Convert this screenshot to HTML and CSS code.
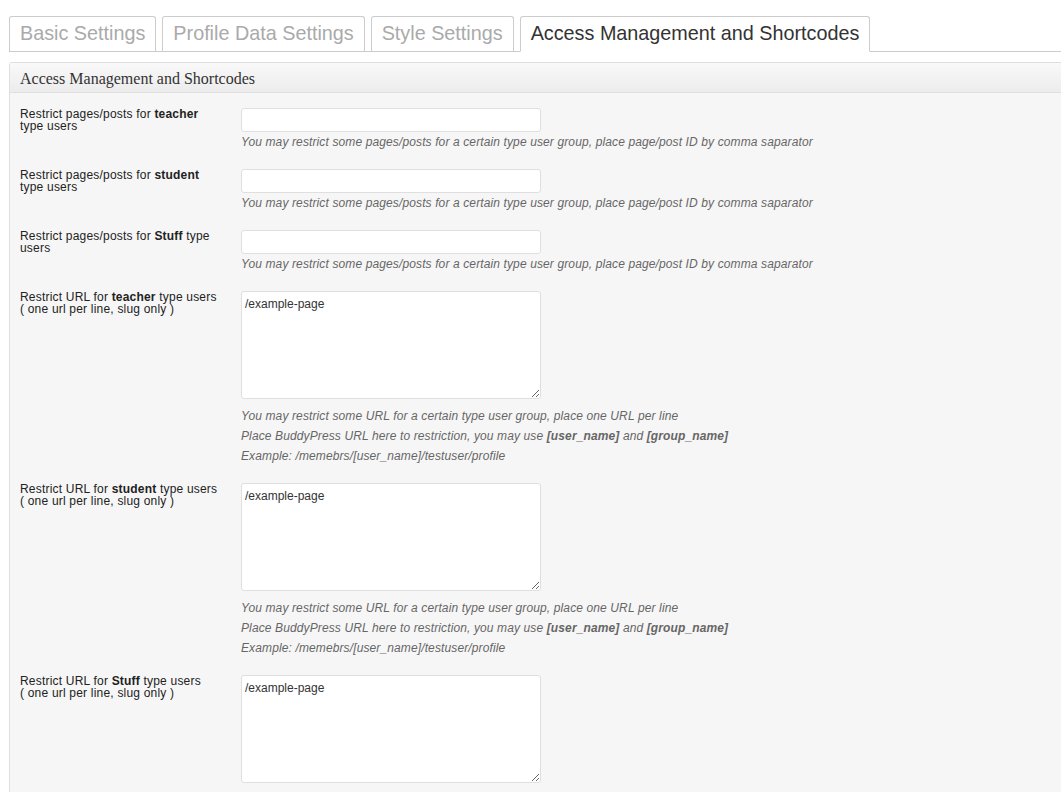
FILE: index.html
```html
<!DOCTYPE html>
<html lang="en">
<head>
<meta charset="utf-8">
<title>Access Management and Shortcodes</title>
<link rel="stylesheet" href="styles.css">
</head>
<body>
<div class="wrap">
  <nav class="tabs">
    <a class="tab">Basic Settings</a>
    <a class="tab">Profile Data Settings</a>
    <a class="tab">Style Settings</a>
    <a class="tab tab-active">Access Management and Shortcodes</a>
  </nav>
  <div class="postbox">
    <h3 class="hndle">Access Management and Shortcodes</h3>
    <div class="inside">
      <div class="row">
        <div class="label">Restrict pages/posts for <b>teacher</b> type users</div>
        <div class="field">
          <input class="text" type="text">
          <p class="desc">You may restrict some pages/posts for a certain type user group, place page/post ID by comma saparator</p>
        </div>
      </div>
      <div class="row">
        <div class="label">Restrict pages/posts for <b>student</b> type users</div>
        <div class="field">
          <input class="text" type="text">
          <p class="desc">You may restrict some pages/posts for a certain type user group, place page/post ID by comma saparator</p>
        </div>
      </div>
      <div class="row">
        <div class="label">Restrict pages/posts for <b>Stuff</b> type users</div>
        <div class="field">
          <input class="text" type="text">
          <p class="desc">You may restrict some pages/posts for a certain type user group, place page/post ID by comma saparator</p>
        </div>
      </div>
      <div class="row">
        <div class="label">Restrict URL for <b>teacher</b> type users<br>( one url per line, slug only )</div>
        <div class="field">
          <textarea class="area">/example-page</textarea>
          <p class="desc">You may restrict some URL for a certain type user group, place one URL per line</p>
          <p class="desc">Place BuddyPress URL here to restriction, you may use <b>[user_name]</b> and <b>[group_name]</b></p>
          <p class="desc">Example: /memebrs/[user_name]/testuser/profile</p>
        </div>
      </div>
      <div class="row">
        <div class="label">Restrict URL for <b>student</b> type users<br>( one url per line, slug only )</div>
        <div class="field">
          <textarea class="area">/example-page</textarea>
          <p class="desc">You may restrict some URL for a certain type user group, place one URL per line</p>
          <p class="desc">Place BuddyPress URL here to restriction, you may use <b>[user_name]</b> and <b>[group_name]</b></p>
          <p class="desc">Example: /memebrs/[user_name]/testuser/profile</p>
        </div>
      </div>
      <div class="row">
        <div class="label">Restrict URL for <b>Stuff</b> type users<br>( one url per line, slug only )</div>
        <div class="field">
          <textarea class="area">/example-page</textarea>
          <p class="desc">You may restrict some URL for a certain type user group, place one URL per line</p>
          <p class="desc">Place BuddyPress URL here to restriction, you may use <b>[user_name]</b> and <b>[group_name]</b></p>
          <p class="desc">Example: /memebrs/[user_name]/testuser/profile</p>
        </div>
      </div>
    </div>
  </div>
</div>
</body>
</html>
```

FILE: styles.css
```css
html, body {
  margin: 0;
  padding: 0;
  background: #fff;
  overflow: hidden;
}

body {
  font-family: "Liberation Sans", Arial, sans-serif;
  font-size: 12px;
  color: #222;
}

.wrap {
  padding: 16px 0 0 9px;
}

.tabs {
  display: flex;
  align-items: flex-end;
  border-bottom: 1px solid #ccc;
}

.tab {
  display: block;
  font-size: 19.8px;
  line-height: 24px;
  padding: 4px 10px 6px;
  margin: 0 6px 0 0;
  border: 1px solid #ccc;
  border-bottom: 0;
  border-radius: 3px 3px 0 0;
  background: #fff;
  color: #aaa;
  white-space: nowrap;
  text-decoration: none;
}

.tab-active {
  color: #333;
  border-bottom: 1px solid #fff;
  margin-bottom: -1px;
}

.postbox {
  margin-top: 10px;
  width: 1100px;
  border: 1px solid #dfdfdf;
  border-right: 0;
  border-radius: 3px 0 0 3px;
  background: #f6f6f6;
}

.hndle {
  margin: 0;
  padding: 8px 10px 6px;
  font-family: "Liberation Serif", Georgia, serif;
  font-size: 16px;
  line-height: 15px;
  font-weight: normal;
  color: #333;
  border-bottom: 1px solid #dfdfdf;
  background: linear-gradient(#f9f9f9, #ececec);
}

.inside {
  padding-top: 8px;
}

.row {
  display: flex;
  padding: 7px 0 10px 10px;
}

.label {
  flex: none;
  width: 200px;
  line-height: 12px;
  letter-spacing: 0.2px;
  color: #222;
}

.field {
  margin-left: 21px;
}

.text {
  display: block;
  box-sizing: border-box;
  width: 300px;
  height: 24px;
  margin: 0;
  border: 1px solid #dfdfdf;
  border-radius: 3px;
  background: #fff;
}

.area {
  display: block;
  box-sizing: border-box;
  width: 300px;
  height: 108px;
  margin: 0 0 7px;
  padding: 5px 3px;
  border: 1px solid #dfdfdf;
  border-radius: 3px;
  background: #fff;
  font-family: "Liberation Sans", Arial, sans-serif;
  font-size: 12px;
  line-height: 14px;
  color: #333;
}

.desc {
  margin: 0;
  line-height: 20px;
  font-style: italic;
  letter-spacing: 0.12px;
  color: #666;
}
```
